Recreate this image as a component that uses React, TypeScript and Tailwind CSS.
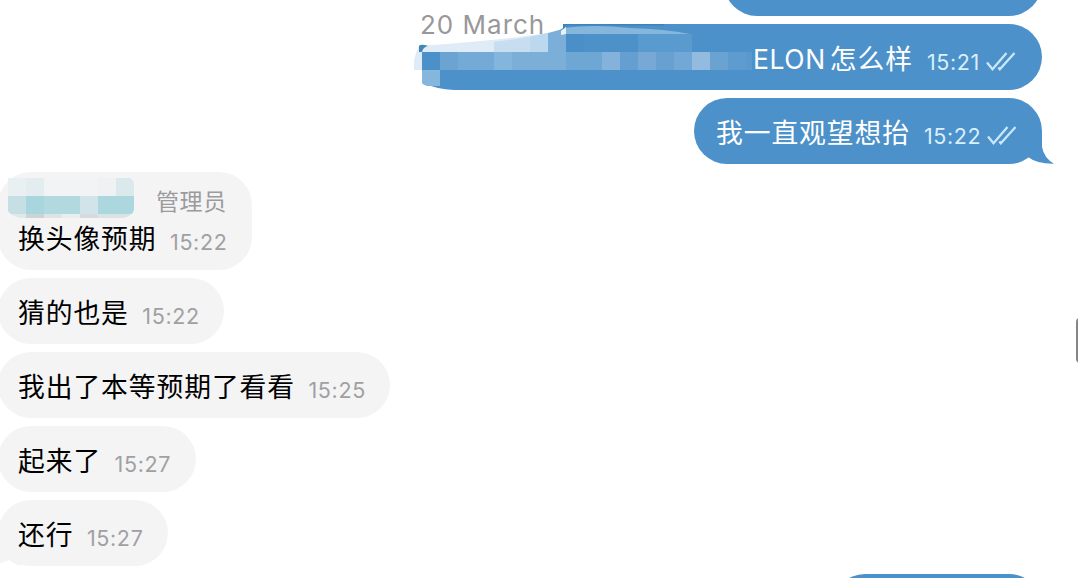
import clsx from 'clsx'

type Incoming = {
  text: string
  time: string
  width: string
  admin?: boolean
  last?: boolean
}

const INCOMING: Incoming[] = [
  { text: '换头像预期', time: '15:22', width: 'w-[254px]', admin: true },
  { text: '猜的也是', time: '15:22', width: 'w-[226px]' },
  { text: '我出了本等预期了看看', time: '15:25', width: 'w-[392px]' },
  { text: '起来了', time: '15:27', width: 'w-[198px]' },
  { text: '还行', time: '15:27', width: 'w-[170px]', last: true },
]

// [x, y, width, height, fill]
type Cell = [number, number, number, number, string]

const MESSAGE_CELLS: Cell[] = [
  [134, 10, 18, 18, '#7baed8'],
  [152, 10, 18, 18, '#4a8fc8'],
  [170, 10, 54, 18, '#4c92c9'],
  [224, 10, 54, 18, '#5a9bcf'],
  [8, 28, 18, 18, '#4b90c8'],
  [26, 28, 18, 18, '#6ba4d3'],
  [44, 28, 36, 18, '#74abd6'],
  [80, 28, 18, 18, '#84b5dc'],
  [98, 28, 54, 18, '#7bafd8'],
  [152, 28, 36, 18, '#6ea6d4'],
  [188, 28, 18, 18, '#85b2da'],
  [206, 28, 18, 18, '#659ed0'],
  [224, 28, 18, 18, '#78a9d6'],
  [242, 28, 18, 18, '#68a0d2'],
  [260, 28, 18, 18, '#73a7d5'],
  [278, 28, 18, 18, '#93bbdf'],
  [296, 28, 18, 18, '#6aa2d2'],
  [314, 28, 18, 18, '#5e9bce'],
  [332, 28, 6, 18, '#5a99cd'],
  [8, 46, 18, 16, '#85b6dc'],
]

const NAME_CELLS: Cell[] = [
  [0, 0, 18, 18, '#e9f0f1'],
  [18, 0, 18, 18, '#e3ecee'],
  [36, 0, 54, 18, '#f1f3f4'],
  [90, 0, 18, 18, '#eff2f3'],
  [108, 0, 18, 18, '#dce9ec'],
  [0, 18, 18, 18, '#c6dfe4'],
  [18, 18, 18, 18, '#a9d5df'],
  [36, 18, 36, 18, '#b2d8e0'],
  [72, 18, 18, 18, '#d0e4e9'],
  [90, 18, 36, 18, '#add7df'],
  [0, 36, 18, 4, '#dfe9eb'],
  [18, 36, 18, 4, '#cdd4d6'],
  [36, 36, 18, 4, '#dfe3e4'],
  [54, 36, 18, 4, '#ebeeee'],
  [72, 36, 18, 4, '#d6dcde'],
  [90, 36, 36, 4, '#dce3e5'],
]

function Cells({ cells }: { cells: Cell[] }) {
  return cells.map(([x, y, w, h, fill]) => (
    <rect key={`${x}-${y}`} x={x} y={y} width={w} height={h} fill={fill} />
  ))
}

function Checks() {
  return (
    <svg className="block h-5 w-[30px]" viewBox="0 0 30 20" fill="none" stroke="#c9e7f9" strokeWidth="2.3">
      <path d="M1 10.5 6.5 17.3 20.5 1" />
      <path d="M12.3 15.6 13.8 17.3 28.5 1" />
    </svg>
  )
}

function Time({ children, out }: { children: string; out?: boolean }) {
  return (
    <span
      className={clsx(
        'text-[21.5px] leading-6 tracking-[0.65px]',
        out ? 'text-[#d9effc]' : 'text-[#a0a0a2]'
      )}
    >
      {children}
    </span>
  )
}

/* Smudged start of the first message */
function MessageSmudge() {
  return (
    <svg className="absolute top-0 left-0 h-[66px] w-[340px]" viewBox="0 0 340 66">
      <defs>
        <clipPath id="smudge">
          <path d="M5 22 Q80 17 134 9 L152 4 H200 L276 10 H340 V46 H26 V66 Q8 61 8 59 V46 H0 V36 Q2 28 5 22Z" />
        </clipPath>
      </defs>
      <path d="M0 0H149L149 4Q142 10 100 16L5 23L0 40V66H40Q22 65 12 60L8 46H0Z" fill="#fff" />
      <path d="M5 22Q80 17 134 9V28H8V46H0V36Q2 28 5 22Z" fill="#dfebf6" />
      <path d="M80 18 Q112 14 134 9V28H80Z" fill="#c8ddf0" />
      <path d="M116 13 L134 9V28H116Z" fill="#bcd8ef" />
      <path d="M134 9L149 5H156V28H134Z" fill="#7baed8" />
      <g clipPath="url(#smudge)">
        <Cells cells={MESSAGE_CELLS} />
      </g>
      <path d="M5 28V22Q6 20 11 21L14 22Q9 23 8 28Z" fill="#4386b6" />
      <path d="M149 4Q180 0 215 4Q252 5 276 10H152V4Z" fill="#85b6dc" />
      <path d="M147 7 152 3V10L147 11Z" fill="#e9f3fa" />
      <path d="M149 0H250V1.5H152L149 5Z" fill="#3f83b9" />
    </svg>
  )
}

function AdminHeader() {
  return (
    <div className="flex h-[40px] pl-2.5">
      <svg className="mt-1.5 h-[40px] w-[126px] shrink-0" viewBox="0 0 126 40">
        <defs>
          <clipPath id="name">
            <path d="M0 0H121Q126 1 126 7V32Q124 38 116 40H12Q3 38 0 33Z" />
          </clipPath>
        </defs>
        <g clipPath="url(#name)">
          <Cells cells={NAME_CELLS} />
        </g>
      </svg>
      <span className="ml-[22px] pt-[13px] text-[23px] leading-[34px] tracking-[0.6px] text-[#9b9b9d]">管理员</span>
    </div>
  )
}

function IncomingBubble({ text, time, width, admin, last }: Incoming) {
  return (
    <div
      className={clsx(
        'relative rounded-[33px] bg-[#f4f4f5]',
        width,
        admin ? 'h-[98px]' : 'h-[66px]'
      )}
    >
      {admin && <AdminHeader />}
      <div className={clsx('flex items-start pl-5', admin ? 'pt-[7px]' : 'pt-[15px]')}>
        <span className="text-[26.8px] leading-10 font-normal tracking-[0.9px] text-black">{text}</span>
        <span className="ml-[13.5px] pt-[11px]">
          <Time>{time}</Time>
        </span>
      </div>
      {last && (
        <svg className="absolute bottom-0 left-0 h-[30px] w-6" viewBox="0 -10 24 30" fill="#f4f4f5">
          <path d="M2-10 24 20Q16 18 11 14Q7 16 2 17Z" />
        </svg>
      )}
    </div>
  )
}

export default function App() {
  return (
    <div className="h-[578px] w-[1078px] overflow-hidden bg-white font-[Inter,'Noto_Sans_CJK_SC',sans-serif]">
      <div className="flex">
        <main className="flex w-[1076px] shrink-0 flex-col gap-2">
          <div className="-mt-[50px] mr-[34px] h-[66px] w-[318px] self-end rounded-[33px] bg-[#4c91c9]" />

          <div className="relative mr-[34px] h-[66px] w-[628px] self-end rounded-r-[33px] bg-[#4c91c9] text-white">
            <MessageSmudge />
            <span className="absolute -top-[15px] left-[6px] text-[26px] leading-8 tracking-[1px] whitespace-nowrap text-[#98989a]">
              20 March
            </span>
            <div className="flex items-start pt-[15px] pl-[339px]">
              <span className="text-[26.5px] leading-10 tracking-[0.6px]">ELON</span>
              <span className="ml-1 text-[26.8px] leading-10 tracking-[0.9px]">怎么样</span>
              <span className="ml-[14px] pt-[11px]">
                <Time out>15:21</Time>
              </span>
              <span className="ml-[6px] pt-[13px]">
                <Checks />
              </span>
            </div>
          </div>

          <div className="relative mr-[34px] h-[66px] w-[348px] self-end rounded-[33px] bg-[#4c91c9] text-white">
            <svg className="absolute -right-3 bottom-0 h-[38px] w-8" viewBox="0 0 32 38" fill="#4c91c9">
              <path d="M0 5H20V21Q22 32 32 37.7Q15 38 6 31Q3 33 0 35Z" />
            </svg>
            <div className="relative flex items-start pt-[15px] pl-[22px]">
              <span className="text-[26.8px] leading-10 tracking-[0.9px]">我一直观望想抬</span>
              <span className="ml-[14px] pt-[11px]">
                <Time out>15:22</Time>
              </span>
              <span className="ml-[5.5px] pt-[13px]">
                <Checks />
              </span>
            </div>
          </div>

          <div className="-ml-0.5 flex flex-col gap-2">
            {INCOMING.map(message => (
              <IncomingBubble key={message.text} {...message} />
            ))}
          </div>

          <div className="mr-[34px] h-[66px] w-[210px] self-end rounded-[33px] bg-[#4c91c9]" />
        </main>

        {/* Scrollbar thumb */}
        <div className="mt-[318px] h-[45px] w-1 shrink-0 rounded-l-sm bg-[#858585]" />
      </div>
    </div>
  )
}
